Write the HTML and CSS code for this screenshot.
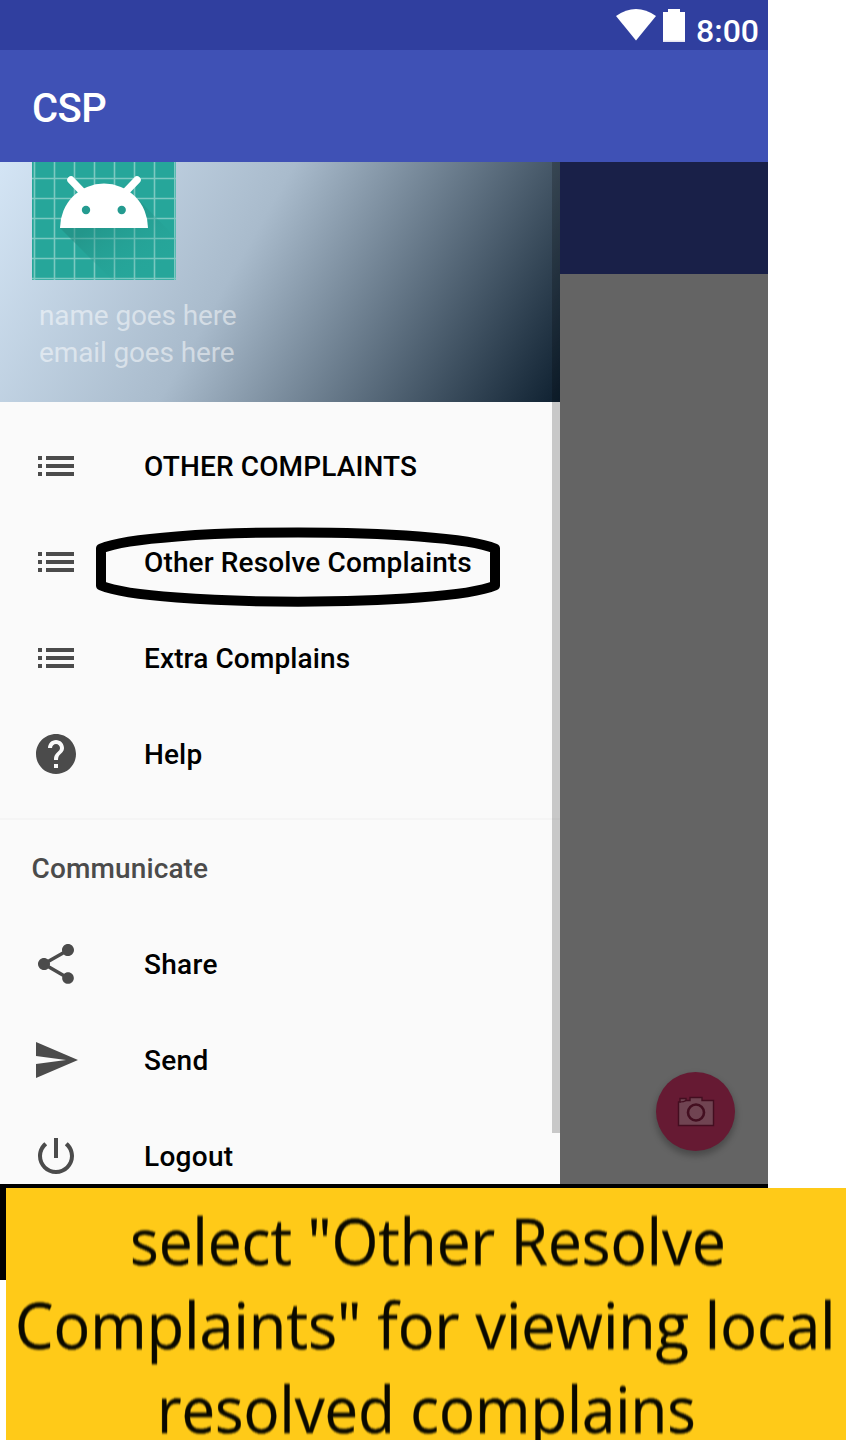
FILE: index.html
```html
<!DOCTYPE html>
<html lang="en">
<head>
<meta charset="utf-8">
<title>CSP</title>
<link rel="stylesheet" href="styles.css">
</head>
<body>
<div class="phone">
  <header class="status">
    <svg class="wifi" width="40" height="32" viewBox="0 0 40 32"><path fill="#fff" d="M0 7Q20-7 40 7L20 31.500Z"/></svg>
    <svg class="battery" width="22" height="33" viewBox="0 0 22 33"><path fill="#fff" d="M5 0H17V3H22V33H0V3H5Z"/><path fill="#e6e4f0" d="M0 31.500H22V33H0Z"/></svg>
    <span class="clock">8:00</span>
  </header>
  <div class="appbar"><span>CSP</span></div>
  <div class="content">
    <aside class="drawer">
      <div class="profile">
        <svg class="avatar" width="144" height="118" viewBox="0 0 144 118">
          <defs><linearGradient id="shade" x1="0" y1="0" x2="1" y2="1"><stop offset="0.3" stop-color="#20867b" stop-opacity=".5"/><stop offset="0.85" stop-color="#26a69a" stop-opacity="0"/></linearGradient></defs>
          <path fill="#26a69a" d="M0 0H144V118H0Z"/>
          <path stroke="#7cc9c1" stroke-width="1.600" fill="none" d="M2.500 0V118M22.500 0V118M42.500 0V118M62.500 0V118M82.500 0V118M102.500 0V118M122.500 0V118M142.800 0V118M0 16.500H144M0 36.500H144M0 56.500H144M0 76.500H144M0 96.500H144M0 116.500H144"/>
          <path fill="url(#shade)" d="M28 66L80 118H144V76L106 37Z"/>
          <path fill="#fff" d="M28 66A44 44.500 0 0 1 116 66Z"/>
          <path stroke="#fff" stroke-width="7.500" stroke-linecap="round" d="M39 18L51 30.500M105 18L93 30.500"/>
          <circle cx="54" cy="48" r="4.200" fill="#249b90"/><circle cx="89.700" cy="48" r="4.200" fill="#249b90"/>
        </svg>
        <div class="who">name goes here</div>
        <div class="who">email goes here</div>
      </div>
      <nav class="menu">
        <a class="item"><svg viewBox="0 0 24 24"><path d="M3 13h2v-2H3v2zm0 4h2v-2H3v2zm0-8h2V7H3v2zm4 4h14v-2H7v2zm0 4h14v-2H7v2zM7 7v2h14V7H7z"/></svg><span>OTHER COMPLAINTS</span></a>
        <a class="item"><svg viewBox="0 0 24 24"><path d="M3 13h2v-2H3v2zm0 4h2v-2H3v2zm0-8h2V7H3v2zm4 4h14v-2H7v2zm0 4h14v-2H7v2zM7 7v2h14V7H7z"/></svg><span>Other Resolve Complaints</span>
          <svg class="marker" viewBox="0 0 404 80"><path fill="none" stroke="#000" stroke-width="10" stroke-linejoin="round" d="M5 21.500C56 0 348 0 399 21.500V58.500C348 80 56 80 5 58.500Z"/></svg>
        </a>
        <a class="item"><svg viewBox="0 0 24 24"><path d="M3 13h2v-2H3v2zm0 4h2v-2H3v2zm0-8h2V7H3v2zm4 4h14v-2H7v2zm0 4h14v-2H7v2zM7 7v2h14V7H7z"/></svg><span>Extra Complains</span></a>
        <a class="item"><svg viewBox="0 0 24 24"><path d="M12 2C6.480 2 2 6.480 2 12s4.480 10 10 10 10-4.480 10-10S17.520 2 12 2zm1 17h-2v-2h2v2zm2.070-7.750l-.9.920C13.450 12.900 13 13.500 13 15h-2v-.5c0-1.100.45-2.100 1.170-2.830l1.240-1.260c.37-.36.59-.86.59-1.410 0-1.100-.9-2-2-2s-2 .9-2 2H8c0-2.210 1.790-4 4-4s4 1.790 4 4c0 .88-.36 1.680-.93 2.250z"/></svg><span>Help</span></a>
      </nav>
      <div class="group">Communicate</div>
      <nav class="menu second">
        <a class="item"><svg viewBox="0 0 24 24"><path d="M18 16.080c-.76 0-1.440.3-1.960.77L8.910 12.700c.05-.23.09-.46.09-.7s-.04-.47-.09-.7l7.050-4.110c.54.5 1.250.81 2.040.81 1.660 0 3-1.340 3-3s-1.340-3-3-3-3 1.340-3 3c0 .24.04.47.09.7L8.040 9.810C7.500 9.310 6.790 9 6 9c-1.660 0-3 1.340-3 3s1.340 3 3 3c.79 0 1.500-.31 2.040-.81l7.120 4.160c-.05.21-.08.43-.08.65 0 1.610 1.310 2.920 2.920 2.920s2.920-1.310 2.920-2.920-1.310-2.920-2.920-2.920z"/></svg><span>Share</span></a>
        <a class="item"><svg viewBox="0 0 24 24"><path d="M2.010 21L23 12 2.010 3 2 10l15 2-15 2z"/></svg><span>Send</span></a>
        <a class="item"><svg viewBox="0 0 24 24"><path d="M13 3h-2v10h2V3zm4.830 2.170l-1.420 1.420C17.990 7.860 19 9.810 19 12c0 3.870-3.130 7-7 7s-7-3.130-7-7c0-2.190 1.010-4.140 2.580-5.420L6.170 5.170C4.230 6.820 3 9.260 3 12c0 4.970 4.030 9 9 9s9-4.030 9-9c0-2.740-1.230-5.180-3.170-6.830z"/></svg><span>Logout</span></a>
      </nav>
      <i class="scrollbar"></i>
    </aside>
    <main class="scrim">
      <div class="dimbar"></div>
      <div class="fab"><svg width="38" height="32" viewBox="0 0 38 32"><path fill="#704452" stroke="#430e20" stroke-width="1.400" d="M1.500 6V29.500H36.500V4.500H25V1.500H13V4.500H9V2.500H3V6Z"/><path stroke="#430e20" stroke-width="1.200" fill="none" d="M3 6Q7 6 9 4.500H13"/><circle cx="19" cy="16.500" r="8" fill="#704452" stroke="#430e20" stroke-width="2.600"/></svg></div>
    </main>
  </div>
  <div class="navbar"></div>
</div>
<div class="caption">
  <div class="line l1">select "Other Resolve</div>
  <div class="line l2">Complaints" for viewing local</div>
  <div class="line l3">resolved complains</div>
</div>
</body>
</html>
```

FILE: styles.css
```css
* { box-sizing: border-box; }
body { margin: 0; width: 857px; height: 1451px; overflow: hidden; background: #fff; font-family: Roboto, sans-serif; }
.phone { width: 768px; height: 1280px; display: flex; flex-direction: column; }
.status { height: 50px; background: #303f9f; display: flex; justify-content: flex-end; align-items: flex-start; padding: 9px 9px 0 0; }
.battery { margin-left: 7px; }
.clock { color: #fff; font-size: 32px; line-height: 38px; margin: 3px 0 0 11px; font-weight: 500; }
.appbar { height: 112px; background: #3f51b5; color: #fff; font-size: 40px; font-weight: 500; letter-spacing: -.6px; display: flex; align-items: center; padding: 4px 0 0 32px; }
.content { height: 1022px; display: flex; }
.drawer { position: relative; width: 560px; height: 1022px; background: #fafafa; overflow: hidden; }
.profile { height: 240px; padding-left: 32px; background: linear-gradient(119.74deg, #daebfb 0%, #a9bbcc 46%, #0e2030 100%) 0 100% / 560px 320px no-repeat; }
.avatar { display: block; margin-bottom: 17px; }
.who { padding-left: 7px; font-size: 28px; line-height: 37px; letter-spacing: -.13px; color: rgba(255,255,255,.5); }
.menu { padding: 16px 0; }
.item { position: relative; display: flex; align-items: center; height: 96px; padding-left: 32px; font-size: 28px; font-weight: 500; letter-spacing: .13px; color: #000; }
.item > svg:first-child { width: 48px; height: 48px; margin-right: 64px; fill: #4b4b4b; }
.item .marker { position: absolute; left: 96px; top: 13px; width: 404px; height: 80px; }
.group { border-top: 2px solid #f5f5f5; height: 98px; padding: 2px 0 0 31.5px; line-height: 94px; font-size: 28px; font-weight: 500; letter-spacing: .13px; color: #4b4b4b; }
.second { padding: 0; }
.second .item { letter-spacing: .3px; }
.scrollbar { position: absolute; top: 0; right: 0; width: 8px; height: 971px; background: rgba(0,0,0,.2); }
.scrim { flex: 1; background: #646464; display: flex; flex-direction: column; justify-content: space-between; align-items: flex-end; }
.dimbar { width: 100%; height: 112px; background: #192048; }
.fab { width: 79px; height: 79px; margin: 0 33px 33px 0; border-radius: 50%; background: #661a33; box-shadow: 0 4px 6px 1px rgba(0,0,0,.26); display: flex; align-items: center; justify-content: center; }
.navbar { height: 96px; background: #000; }
.caption { position: absolute; left: 6px; top: 1188px; width: 840px; height: 252px; padding-top: 11px; background: #ffca18; overflow: hidden; color: #0a0900; font-family: "Open Sans", "Noto Sans", sans-serif; font-size: 64px; }
.line { width: max-content; height: 84px; line-height: 84px; white-space: nowrap; filter: blur(.8px); -webkit-text-stroke: .4px #0a0900; transform-origin: 0 0; }
.l1 { margin-left: 123.5px; transform: scaleX(.941); }
.l2 { margin-left: 8.5px; transform: scaleX(.954); }
.l3 { margin-left: 151px; transform: scaleX(.935); }
```
